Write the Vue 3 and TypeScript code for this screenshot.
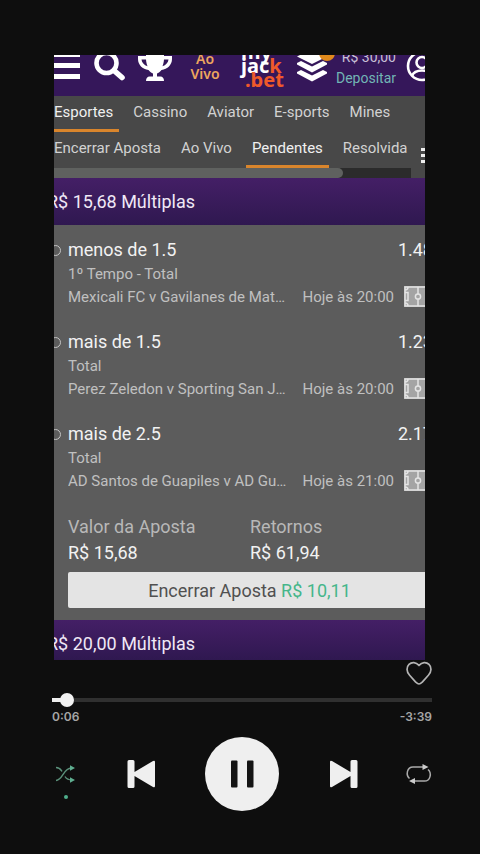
<script setup lang="ts">
import { ref } from 'vue'

interface Selection {
  pick: string
  odds: string
  market: string
  match: string
  time: string
}

const mainTabs: string[] = ['Esportes', 'Cassino', 'Aviator', 'E-sports', 'Mines']
const betTabs: string[] = ['Encerrar Aposta', 'Ao Vivo', 'Pendentes', 'Resolvida']
const activeMain = ref('Esportes')
const activeBet = ref('Pendentes')
const position = ref(5)

const selections: Selection[] = [
  { pick: 'menos de 1.5', odds: '1.48', market: '1º Tempo - Total', match: 'Mexicali FC v Gavilanes de Matamoros', time: 'Hoje às 20:00' },
  { pick: 'mais de 1.5', odds: '1.23', market: 'Total', match: 'Perez Zeledon v Sporting San Jose', time: 'Hoje às 20:00' },
  { pick: 'mais de 2.5', odds: '2.17', market: 'Total', match: 'AD Santos de Guapiles v AD Guanacasteca', time: 'Hoje às 21:00' },
]
</script>

<template>
  <main class="screen">
    <section class="viewport">
      <header class="topbar">
        <div class="topbar-row">
          <button class="icon-btn" aria-label="Menu">
            <svg width="28" height="36" viewBox="0 0 28 36">
              <path d="M0 4h26v5H0zM0 15h26v5H0zM0 26h26v5H0z" fill="#fff" />
            </svg>
          </button>
          <button class="icon-btn" aria-label="Buscar">
            <svg width="31" height="36" viewBox="0 0 31 36">
              <circle cx="12.500" cy="15" r="10" fill="none" stroke="#fff" stroke-width="4.600" />
              <path d="M20 22.500l8 7" stroke="#fff" stroke-width="5.600" stroke-linecap="round" />
            </svg>
          </button>
          <button class="icon-btn" aria-label="Torneios">
            <svg width="36" height="36" viewBox="0 0 36 36">
              <path d="M9 4h18v4h8v3c0 6-4.500 10-10.500 11-1.500 2-3 3-4.500 3.500v3h3.500c2 0 3.500 1.500 3.500 4.500H9c0-3 1.500-4.500 3.500-4.500H16v-3c-1.500-.500-3-1.500-4.500-3.500C5.500 21 1 17 1 11V8h8z" fill="#fff" />
              <path d="M4.500 11.500H9c.200 3 .800 5 1.600 6.800C7 17 4.800 14.700 4.500 11.500zM31.500 11.500H27c-.200 3-.800 5-1.600 6.800 3.600-1.300 5.800-3.600 6.100-6.800z" fill="#35175a" />
            </svg>
          </button>
          <a class="live" href="#">Ao<br />Vivo</a>
          <a class="logo" href="#">
            <span>my</span>
            <span>jac<b>k</b></span>
            <b class="logo-bet">.bet</b>
          </a>
          <button class="icon-btn bets" aria-label="Apostas">
            <svg width="30" height="36" viewBox="0 0 30 36">
              <path d="M15 1l15 7.500-15 7.500L0 8.500z" fill="#fff" />
              <path d="M0 15l4-2 11 5.500L26 13l4 2v1.500l-15 8-15-8zM0 24l4-2 11 5.500L26 22l4 2v1.500l-15 8-15-8z" fill="#fff" />
            </svg>
            <span class="badge"></span>
          </button>
          <a class="balance" href="#"><span>R$ 30,00</span><span class="deposit">Depositar</span></a>
          <button class="icon-btn" aria-label="Conta">
            <svg width="32" height="36" viewBox="0 0 32 36">
              <circle cx="14" cy="18" r="14" fill="none" stroke="#fff" stroke-width="2.600" />
              <circle cx="14" cy="14.500" r="5.500" fill="none" stroke="#fff" stroke-width="2.600" />
              <path d="M4 28c1.500-4 5-5.500 10-5.500s8.500 1.500 10 5.500" fill="none" stroke="#fff" stroke-width="2.600" />
            </svg>
          </button>
        </div>
      </header>

      <nav class="tabs tabs-main">
        <button v-for="t in mainTabs" :key="t" class="tab" :class="{ active: t === activeMain }" @click="activeMain = t">{{ t }}</button>
      </nav>
      <div class="subnav">
        <div class="subnav-scroll">
          <nav class="tabs">
            <button v-for="t in betTabs" :key="t" class="tab" :class="{ active: t === activeBet }" @click="activeBet = t">{{ t }}</button>
          </nav>
          <div class="track"><div class="track-thumb"></div></div>
        </div>
        <button class="more" aria-label="Mais opções"><i></i><i></i><i></i></button>
      </div>

      <h2 class="slip-title">R$ 15,68 Múltiplas</h2>
      <article class="slip">
        <div v-for="s in selections" :key="s.match" class="selection">
          <span class="marker"></span>
          <div class="line pick"><span>{{ s.pick }}</span><span class="odds">{{ s.odds }}</span></div>
          <div class="line">{{ s.market }}</div>
          <div class="line event">
            <span class="match">{{ s.match }}</span>
            <span class="time">{{ s.time }}</span>
            <svg class="pitch" width="28" height="21" viewBox="0 0 28 21">
              <rect width="28" height="21" fill="#a4a4a4" />
              <path d="M1 1h26v19H1zM14 1v19M1 6.500h3v8H1M27 6.500h-3v8h3M1 4q3 0 3-3M1 17q3 0 3 3" fill="none" stroke="#e4e4e4" stroke-width="1.500" />
              <circle cx="14" cy="10.500" r="2.600" fill="#a4a4a4" stroke="#e4e4e4" stroke-width="1.500" />
            </svg>
          </div>
        </div>
        <dl class="totals">
          <div><dt>Valor da Aposta</dt><dd>R$ 15,68</dd></div>
          <div><dt>Retornos</dt><dd>R$ 61,94</dd></div>
        </dl>
        <button class="cashout">Encerrar Aposta <span>R$ 10,11</span></button>
      </article>
      <h2 class="slip-title slip-next">R$ 20,00 Múltiplas</h2>
    </section>

    <section class="player">
      <button class="plain heart" aria-label="Curtir">
        <svg width="26" height="25" viewBox="0 0 26 25">
          <path d="M13 24C11.500 24 10.500 22.800 9.500 21.800L3.600 15.300C.300 11.600.300 7 3 4.400c2.800-2.700 7-2.300 10 .900 3-3.200 7.200-3.600 10-.900 2.700 2.600 2.700 7.200-.600 10.900L16.500 21.800c-1 1-2 2.200-3.500 2.200z" fill="none" stroke="#b4b4b4" stroke-width="1.700" />
        </svg>
      </button>
      <input v-model.number="position" class="seek" type="range" min="0" max="225" aria-label="Posição" />
      <div class="times"><span>0:06</span><span>-3:39</span></div>
      <div class="controls">
        <button class="plain shuffle" aria-label="Aleatório">
          <svg width="28" height="20" viewBox="0 0 28 20" fill="none" stroke="#5b917b" stroke-width="1.400">
            <path d="M4 3.500c4 0 5 2.500 6 4M13 12.500c1.500 2.500 3.500 3.500 7 3.500M4 16.500c7 0 7-12.500 15.500-12.500" />
            <path d="M18 1.200l5 2.800-5 2.800zM18 13.200l5 2.800-5 2.800z" fill="#5fae90" stroke="none" />
          </svg>
          <span class="dot"></span>
        </button>
        <button class="plain" aria-label="Anterior">
          <svg width="28" height="30" viewBox="0 0 28 30">
            <path d="M0 1h4q1.500 0 1.500 1.500v10.500L24 2q2-1 2 1v24q0 2-2 1L5.500 17v10.500Q5.500 29 4 29H0q-1.500 0-1.500-1.500v-25Q-1.500 1 0 1z" fill="#efefef" />
          </svg>
        </button>
        <button class="plain" aria-label="Pausar">
          <svg width="74" height="74" viewBox="0 0 74 74">
            <circle cx="37" cy="37" r="37" fill="#efefef" />
            <rect x="26" y="23.500" width="6.500" height="27" rx="1" fill="#141414" />
            <rect x="42" y="23.500" width="6.500" height="27" rx="1" fill="#141414" />
          </svg>
        </button>
        <button class="plain" aria-label="Próxima">
          <svg width="28" height="30" viewBox="0 0 28 30">
            <path d="M28 1h-4q-1.500 0-1.500 1.500v10.500L4 2Q2 1 2 3v24q0 2 2 1l18.500-11v10.500q0 1.500 1.500 1.500h4q1.500 0 1.500-1.500v-25Q29.500 1 28 1z" fill="#efefef" />
          </svg>
        </button>
        <button class="plain" aria-label="Repetir">
          <svg width="28" height="24" viewBox="0 0 28 24" fill="none" stroke="#aaa" stroke-width="1.500">
            <path d="M5.500 16.500C1.500 13 3 5 9 5h11M24 7.500C28 11 26.500 19 20.500 19H9" />
            <path d="M18.500 2l6 3-6 3zM11 16l-6 3 6 3z" fill="#ccc" stroke="none" />
          </svg>
        </button>
      </div>
    </section>
  </main>
</template>

<style>
body {
  background: #0e0e0e;
}
</style>

<style scoped>
.screen {
  min-height: 100vh;
  box-sizing: border-box;
  padding-top: 55px;
  background: #0e0e0e;
  color: #fff;
  font-family: Roboto, "Liberation Sans", sans-serif;
}
button {
  border: 0;
  padding: 0;
  background: none;
  color: inherit;
  font: inherit;
}
a {
  color: inherit;
  text-decoration: none;
}
svg {
  display: block;
  overflow: visible;
}
.viewport {
  margin: 0 55px 0 54px;
  overflow: hidden;
  background: #5c5c5c;
}
.topbar {
  overflow: hidden;
  background: #35175a;
}
.topbar-row {
  display: grid;
  grid-template-columns: 28px 31px 36px 40px 48px 30px 57px 32px;
  column-gap: 12px;
  align-items: end;
  height: 57px;
  margin-top: -16px;
}
.icon-btn {
  position: relative;
  padding-bottom: 12px;
}
.badge {
  position: absolute;
  top: -3px;
  right: -8px;
  width: 16px;
  height: 16px;
  border-radius: 50%;
  background: #e08a1c;
}
.live {
  padding-bottom: 15px;
  color: #eda65e;
  font: 600 14px/15px "Noto Sans", sans-serif;
  text-align: center;
}
.logo {
  display: flex;
  flex-direction: column;
  padding: 0 0 9px 4px;
  font: 700 20px/14px "Noto Sans", sans-serif;
}
.logo b {
  color: #ef5a2a;
  font-weight: 700;
}
.logo .logo-bet {
  padding-left: 4px;
}
.balance {
  display: flex;
  flex-direction: column;
  align-items: flex-end;
  padding-bottom: 7px;
  color: #c9c0d6;
  font-size: 14px;
  line-height: 21px;
  white-space: nowrap;
}
.deposit {
  color: #72b5b5;
}
.tabs {
  display: flex;
  gap: 8px;
  margin-left: -6px;
}
.tabs-main {
  margin-left: 0;
}
.tabs-main,
.subnav {
  background: #484848;
}
.tabs-main .tab:first-child {
  margin-left: -6px;
}
.tab {
  flex: none;
  height: 36px;
  padding: 0 6px;
  border-bottom: 3px solid transparent;
  color: #d2d2d2;
  font-size: 15px;
  line-height: 33px;
  white-space: nowrap;
}
.tab.active {
  border-bottom-color: #d9852c;
  color: #f0f0f0;
}
.subnav {
  display: flex;
}
.subnav-scroll {
  flex: 1;
  min-width: 0;
  overflow: hidden;
}
.track {
  height: 10px;
  background: #2b2b2b;
}
.track-thumb {
  width: 81%;
  height: 10px;
  border-radius: 0 5px 5px 0;
  background: #5f615f;
}
.more {
  display: flex;
  flex-direction: column;
  gap: 3px;
  width: 14px;
  padding: 16px 0 0 10px;
}
.more i {
  width: 4px;
  height: 3px;
  background: #eee;
}
.slip-title {
  height: 47px;
  margin: 0;
  background: linear-gradient(#441f66, #2f1850);
  color: #f0e8f6;
  font-size: 18px;
  font-weight: 400;
  line-height: 47px;
  text-indent: -7px;
  white-space: nowrap;
}
.slip-next {
  height: 40px;
}
.slip {
  padding: 11px 0 12px 14px;
}
.selection {
  position: relative;
  height: 92px;
  color: #c0c0c0;
  font-size: 15px;
}
.marker {
  position: absolute;
  top: 9px;
  left: -18px;
  width: 9px;
  height: 9px;
  border: 1px solid #c4c4c4;
  border-radius: 50%;
}
.line {
  display: flex;
  align-items: center;
  height: 23px;
  white-space: nowrap;
}
.pick {
  justify-content: space-between;
  height: 26px;
  margin-right: -8px;
  color: #f2f2f2;
  font-size: 18px;
}
.event {
  margin-right: -7px;
}
.match {
  flex: 1;
  min-width: 0;
  overflow: hidden;
  text-overflow: ellipsis;
}
.time {
  margin: 0 10px 0 13px;
}
.pitch {
  flex: none;
}
.totals {
  display: grid;
  grid-template-columns: 182px 1fr;
  margin: 0;
  padding: 2px 0 6px;
  font-size: 18px;
  line-height: 26px;
}
.totals dt {
  color: #b8b8b8;
}
.totals dd {
  margin: 0;
  color: #f2f2f2;
}
.cashout {
  display: block;
  width: 100%;
  height: 36px;
  border-radius: 2px 0 0 2px;
  padding-left: 6px;
  background: #e4e4e4;
  color: #505050;
  font-size: 18px;
}
.cashout span {
  color: #45b68a;
}
.player {
  padding: 0 48px 0 52px;
}
.heart {
  display: block;
  margin-left: auto;
}
.seek {
  display: block;
  width: 100%;
  height: 14px;
  margin: 8px 0 0;
  appearance: none;
  background: linear-gradient(90deg, #eee 10px, #303030 10px) center / 100% 4px no-repeat;
}
.seek::-webkit-slider-thumb {
  width: 14px;
  height: 14px;
  appearance: none;
  border-radius: 50%;
  background: #f2f2f2;
}
.times {
  display: flex;
  justify-content: space-between;
  margin-top: 2px;
  color: #a6a6a6;
  font: 600 12px/16px Inter, sans-serif;
}
.controls {
  display: flex;
  align-items: center;
  justify-content: space-between;
  margin-top: 12px;
  padding-bottom: 42px;
}
.plain {
  display: block;
}
.shuffle {
  position: relative;
}
.dot {
  position: absolute;
  top: 31px;
  left: 12px;
  width: 4px;
  height: 4px;
  border-radius: 50%;
  background: #4fae8c;
}
</style>
